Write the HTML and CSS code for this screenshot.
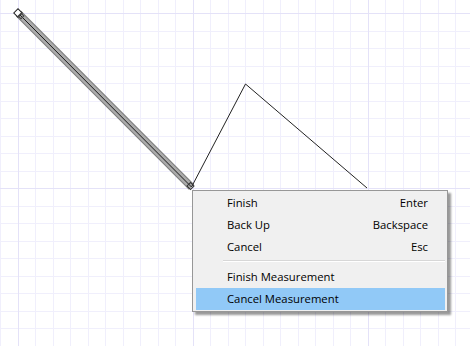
FILE: index.html
```html
<!DOCTYPE html>
<html>
<head>
<meta charset="utf-8">
<title>Measure</title>
<link rel="stylesheet" href="styles.css">
</head>
<body>
  <div class="stage">
    <!-- drawing canvas: grid, measured segment, rubber-band line -->
    <svg class="canvas" viewBox="0 0 470 346" width="470" height="346">
      <defs>
        <pattern id="minor" patternUnits="userSpaceOnUse" x="18" y="13" width="35" height="35">
          <line x1="0.5" y1="0" x2="0.5" y2="35"/>
          <line x1="17.5" y1="0" x2="17.5" y2="35"/>
          <line x1="0" y1="0.5" x2="35" y2="0.5"/>
          <line x1="0" y1="18.5" x2="35" y2="18.5"/>
        </pattern>
        <pattern id="major" patternUnits="userSpaceOnUse" x="18" y="13" width="175" height="175">
          <line x1="0.5" y1="0" x2="0.5" y2="175"/>
          <line x1="0" y1="0.5" x2="175" y2="0.5"/>
        </pattern>
      </defs>
      <rect class="paper" x="0" y="0" width="470" height="346"/>
      <rect class="grid-minor" x="0" y="0" width="470" height="346" fill="url(#minor)"/>
      <rect class="grid-major" x="0" y="0" width="470" height="346" fill="url(#major)"/>

      <g class="segment">
        <line class="seg-edge" x1="18.5" y1="13.5" x2="191.5" y2="187"/>
        <line class="seg-fill" x1="18.5" y1="13.5" x2="191.5" y2="187"/>
        <line class="seg-core" x1="18.5" y1="13.5" x2="191.5" y2="187"/>
      </g>
      <polyline class="rubber" points="191.5,187 245.5,84 367,188"/>

      <rect class="handle" x="-3" y="-3" width="6" height="6" transform="translate(18,13) rotate(45)"/>
      <rect class="handle-in" x="-2" y="-2" width="4" height="4" transform="translate(21,16) rotate(45)"/>
      <rect class="handle-end" x="-2.5" y="-2.5" width="5" height="5" transform="translate(190.5,186) rotate(45)"/>
    </svg>

    <div class="menu">
      <div class="item"><span class="label">Finish</span><span class="key">Enter</span></div>
      <div class="item"><span class="label">Back Up</span><span class="key">Backspace</span></div>
      <div class="item"><span class="label">Cancel</span><span class="key">Esc</span></div>
      <div class="sep"></div>
      <div class="item"><span class="label">Finish Measurement</span></div>
      <div class="item active"><span class="label">Cancel Measurement</span></div>
    </div>
  </div>
</body>
</html>
```

FILE: styles.css
```css
/* page */
html, body { margin: 0; padding: 0; background: #fff; }
.stage { position: relative; width: 470px; height: 346px; overflow: hidden; }
.canvas { display: block; }

/* grid paper */
.paper { fill: #fff; }
#minor line { stroke: #f0effc; stroke-width: 1; }
#major line { stroke: #e4e2f8; stroke-width: 1; }

/* measured segment */
.seg-edge { stroke: #7c7c7c; stroke-width: 7.5; }
.seg-fill { stroke: #ababab; stroke-width: 5.5; }
.seg-core { stroke: #1a1a1a; stroke-width: 1; }
.rubber { fill: none; stroke: #222; stroke-width: 1; }
.handle { fill: #fff; stroke: #222; stroke-width: 1; }
.handle-in { fill: none; stroke: #444; stroke-width: 1; }
.handle-end { fill: none; stroke: #333; stroke-width: 1; }

/* context menu */
.menu {
  position: absolute; left: 192px; top: 190px;
  width: 256px; box-sizing: border-box;
  padding: 1px 2px 1px 3px;
  background: #f0f0f0; border: 1px solid #979797;
  box-shadow: 3px 3px 2px rgba(0, 0, 0, 0.4);
  font-family: "Open Sans", "Noto Sans", sans-serif; font-size: 11.3px; color: #000;
}
.item {
  display: flex; justify-content: space-between; align-items: center;
  box-sizing: border-box; height: 22px; padding: 0 17px 2px 31px;
}
.item.active { background: #91c9f7; }
.sep { height: 1px; margin: 2px 0 4px 27px; background: #d7d7d7; border-bottom: 1px solid #fff; }
```
